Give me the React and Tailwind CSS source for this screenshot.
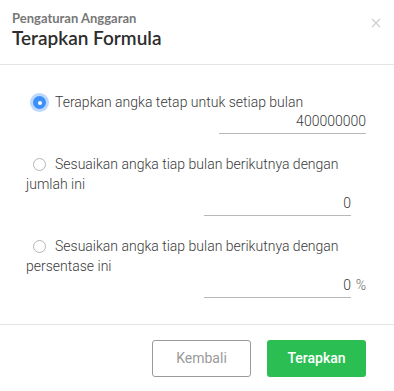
import React, { useState } from 'react';

const labelFont = { fontFamily: 'Roboto, "Liberation Sans", sans-serif' };

const Radio = ({ checked }) =>
  checked ? (
    <span className="relative ml-[7px] mr-[9px] inline-block h-[13px] w-[13px] rounded-full bg-[#3d8ef7] align-[-2px] shadow-[0_0_0_3px_rgba(61,142,247,0.35)]">
      <span className="absolute left-[4.5px] top-[4.5px] h-[4px] w-[4px] rounded-full bg-white" />
    </span>
  ) : (
    <span className="ml-[7px] mr-[9px] inline-block h-[13px] w-[13px] rounded-full border border-[#b5b5b5] bg-white align-[-2px]" />
  );

const Option = ({ checked, label, value, suffix, onPick }) => (
  <div className="flex flex-col">
    <p
      className="cursor-pointer text-[14px] font-light leading-[20px] text-[#3a3a3a]"
      onClick={onPick}
    >
      <Radio checked={checked} />
      {label}
    </p>
    <div className="flex justify-end">
      <div className="flex h-[22px] w-[147px] items-center justify-end border-b border-[#b8b8b8] pb-[2px] text-[14px] font-light text-[#3a3a3a]">
        {value}
      </div>
      {suffix !== undefined && (
        <div className="flex h-[22px] w-[15px] items-center justify-end pb-[4px] text-[14px] font-light text-[#666]">
          {suffix}
        </div>
      )}
    </div>
  </div>
);

export default function App() {
  const [pick, setPick] = useState(0);

  return (
    <div className="h-[391px] w-[394px] bg-white">
      {/* header */}
      <div
        className="relative px-3 pb-[14px] pt-[10px]"
        style={{ fontFamily: 'Lato, "Open Sans", sans-serif' }}
      >
        <div className="text-[13px] font-bold leading-[16px] text-[#777]">
          Pengaturan Anggaran
        </div>
        <div className="text-[19px] font-semibold leading-[24px] text-[#2d2d2d]">
          Terapkan Formula
        </div>
        <button className="absolute right-[13px] top-[18px] text-[#cfcfcf]">
          <svg width="10" height="10" viewBox="0 0 10 10">
            <path d="M1 1L9 9M9 1L1 9" stroke="currentColor" strokeWidth="1.2" />
          </svg>
        </button>
      </div>
      <div className="h-px bg-[#e4e4e4]" />

      {/* body */}
      <div className="flex flex-col gap-5 pb-[26px] pl-[26px] pr-[28px] pt-[27px]" style={labelFont}>
        <Option
          checked={pick === 0}
          onPick={() => setPick(0)}
          label="Terapkan angka tetap untuk setiap bulan"
          value="400000000"
        />
        <Option
          checked={pick === 1}
          onPick={() => setPick(1)}
          label="Sesuaikan angka tiap bulan berikutnya dengan jumlah ini"
          value="0"
          suffix=""
        />
        <Option
          checked={pick === 2}
          onPick={() => setPick(2)}
          label="Sesuaikan angka tiap bulan berikutnya dengan persentase ini"
          value="0"
          suffix="%"
        />
      </div>
      <div className="h-px bg-[#e4e4e4]" />

      {/* footer */}
      <div className="flex justify-end gap-4 pr-[28px] pt-[15px]" style={labelFont}>
        <button className="h-[37px] w-[99px] rounded-[3px] border border-[#9a9a9a] text-[14px] text-[#9a9a9a]">
          Kembali
        </button>
        <button className="h-[37px] w-[99px] rounded-[3px] bg-[#2bbf53] text-[14px] font-medium text-white">
          Terapkan
        </button>
      </div>
    </div>
  );
}
